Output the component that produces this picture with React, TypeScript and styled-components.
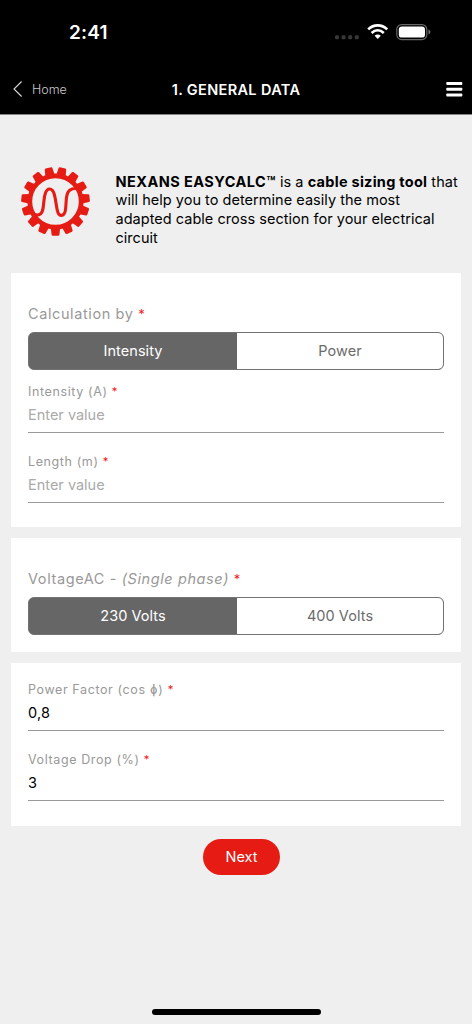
import React from "react";
import styled, { createGlobalStyle } from "styled-components";

const GlobalStyle = createGlobalStyle`
  * { box-sizing: border-box; }
  body {
    margin: 0;
    background: #efefef;
    font-family: Inter, "Liberation Sans", sans-serif;
    color: #000;
  }
`;

const Screen = styled.main`
  display: flex;
  flex-direction: column;
  width: 472px;
  height: 1024px;
  background: #efefef;
  overflow: hidden;
`;

const Header = styled.header`
  height: 115px;
  background: #000;
  color: #fff;
  border-bottom: 1px solid #858585;
`;

const StatusBar = styled.div`
  display: flex;
  align-items: center;
  justify-content: space-between;
  height: 64px;
  padding: 0 41px 0 69px;
`;

const Clock = styled.span`
  font-size: 19px;
  font-weight: 600;
  line-height: 24px;
  letter-spacing: 0.15px;
  margin-top: 1px;
`;

const NavBar = styled.nav`
  display: grid;
  grid-template-columns: 134px 1fr 138px;
  align-items: center;
  height: 50px;
  padding: 0 9px 0 13px;
`;

const Back = styled.a`
  display: flex;
  align-items: center;
  gap: 10px;
  font-size: 12.5px;
  font-weight: 300;
  line-height: 18px;
  color: #c9c9c9;
`;

const BackText = styled.span`
  padding-top: 2px;
`;

const Title = styled.h1`
  margin: 1px 0 0;
  font-size: 14.5px;
  font-weight: 600;
  line-height: 18px;
  letter-spacing: 0.35px;
  text-align: center;
  white-space: nowrap;
`;

const MenuIcon = styled.svg`
  justify-self: end;
`;

const Intro = styled.section`
  display: flex;
  height: 158px;
  padding: 52px 0 0 21px;
`;

const IntroText = styled.p`
  margin: 5.7px 0 0 25.5px;
  width: 350px;
  font-size: 14.5px;
  line-height: 18.75px;
  letter-spacing: 0.03px;
`;

const Line = styled.span`
  display: block;
  white-space: nowrap;
`;

const Strong = styled.b<{ $spacing: number }>`
  font-weight: 700;
  letter-spacing: ${(p) => p.$spacing}px;
`;

const Card = styled.section<{ $height: number; $top: number }>`
  flex: none;
  height: ${(p) => p.$height}px;
  margin: 0 11px 11px;
  padding: ${(p) => p.$top}px 17px 0;
  background: #fff;
`;

const GroupLabel = styled.div`
  height: 28px;
  font-size: 14.5px;
  line-height: 20px;
  letter-spacing: 0.6px;
  color: #999;
`;

const Required = styled.span`
  font-size: 0.9em;
  color: #ee1c1c;
`;

const Segments = styled.div`
  display: flex;
  height: 38px;
  border: 1px solid #737373;
  border-radius: 6px;
  background: #666;
`;

const Segment = styled.button<{ $active?: boolean }>`
  flex: ${(p) => (p.$active ? "0 0 208px" : "1")};
  padding: 0;
  border: 0;
  border-radius: ${(p) => (p.$active ? "5px 0 0 5px" : "0 5px 5px 0")};
  font: 400 14.5px/36px Inter, sans-serif;
  letter-spacing: 0.06px;
  background: ${(p) => (p.$active ? "#666" : "#fff")};
  color: ${(p) => (p.$active ? "#fff" : "#6b6b6b")};
`;

const FieldBox = styled.div`
  display: flex;
  flex-direction: column;
  height: 70.3px;
`;

const FieldLabel = styled.label`
  height: 18px;
  font-size: 12.5px;
  line-height: 20px;
  letter-spacing: 0.61px;
  color: #999;
`;

const FieldValue = styled.div<{ $empty?: boolean }>`
  height: 33px;
  padding-top: 5px;
  border-bottom: 1px solid #999;
  font-size: 14.5px;
  line-height: 20px;
  letter-spacing: ${(p) => (p.$empty ? 0 : 0.2)}px;
  color: ${(p) => (p.$empty ? "#aaa" : "#000")};
`;

const Next = styled.button`
  flex: none;
  align-self: center;
  width: 77px;
  height: 36px;
  margin: 2px 0 0 11px;
  padding: 0;
  border: 0;
  border-radius: 18px;
  background: #e51b14;
  color: #fff;
  font: 400 14.5px/36px Inter, sans-serif;
`;

const HomeIndicator = styled.div`
  flex: none;
  align-self: center;
  width: 169px;
  height: 6px;
  margin: auto 0 9px;
  border-radius: 3px;
  background: #000;
`;

function StatusIcons() {
  return (
    <svg width="97" height="18" viewBox="0 0 97 18">
      <g fill="#383838">
        <rect x="1" y="12.3" width="4" height="4" rx="1.3" />
        <rect x="7.5" y="12.3" width="4" height="4" rx="1.3" />
        <rect x="14.2" y="12.3" width="4" height="4" rx="1.3" />
        <rect x="20.8" y="12.3" width="4" height="4" rx="1.3" />
      </g>
      <g fill="none" stroke="#fff" strokeWidth="2.7">
        <path d="M34.2 6.4C39.6 1.1 47.8 1.1 53.2 6.4" />
        <path d="M37.6 9.9C41.3 6.5 46.1 6.5 49.8 9.9" />
      </g>
      <path fill="#fff" d="M43.7 16L40.6 12.7Q43.7 10.1 46.8 12.7Z" />
      <rect x="62.8" y="1.6" width="30" height="15" rx="4.8" fill="none" stroke="#666" strokeWidth="1.2" />
      <rect x="64.8" y="3.5" width="26.2" height="11.1" rx="3.2" fill="#fff" />
      <path fill="#777" d="M94.5 6.6Q96.3 7.4 96.3 9.1Q96.3 10.8 94.5 11.6Z" />
    </svg>
  );
}

const TEETH = Array.from({ length: 15 }, (_, i) => 12 + i * 24);

function GearLogo() {
  return (
    <svg width="69" height="70" viewBox="-34.5 -34.5 69 70">
      <g fill="#e51b14">
        {TEETH.map((angle) => (
          <path
            key={angle}
            transform={`rotate(${angle})`}
            d="M-4.7 -26.5L-3.9 -33.3Q-3.7 -34.3 -2.8 -34.3H2.8Q3.7 -34.3 3.9 -33.3L4.7 -26.5Z"
          />
        ))}
      </g>
      <circle r="25.7" fill="none" stroke="#e51b14" strokeWidth="4.8" />
      <path
        d="M-21 13C-16 14.5-13.3 12.5-12.4 6.5C-11.5 .5-11.6-4-10.3-7.7C-8.3-14.2-3.4-14-1.4-7.7C.2-2.5.7 4 1.8 8.8C3.4 15.6 8.7 15.6 9.9 8.8C10.8 3.5 10.2-2 11.6-7C13-12 16-13.3 21-12.9"
        fill="none"
        stroke="#e51b14"
        strokeWidth="3.1"
      />
    </svg>
  );
}

interface FieldProps {
  label: string;
  value?: string;
}

function Field({ label, value }: FieldProps) {
  return (
    <FieldBox>
      <FieldLabel>
        {label} <Required>*</Required>
      </FieldLabel>
      <FieldValue $empty={!value}>{value ?? "Enter value"}</FieldValue>
    </FieldBox>
  );
}

const FieldGroup = styled.div`
  padding-top: 12px;
`;

export default function App() {
  return (
    <Screen>
      <GlobalStyle />
      <Header>
        <StatusBar>
          <Clock>2:41</Clock>
          <StatusIcons />
        </StatusBar>
        <NavBar>
          <Back>
            <svg width="9" height="16" viewBox="0 0 9 16" fill="none" stroke="#d8d8d8" strokeWidth="1.1">
              <path d="M8.6 .5L1 8L8.6 15.5" />
            </svg>
            <BackText>Home</BackText>
          </Back>
          <Title>1. GENERAL DATA</Title>
          <MenuIcon width="17" height="16" viewBox="0 0 17 16" fill="#fff">
            <rect x="0.3" y="1" width="16" height="3" rx="0.8" />
            <rect x="0.3" y="6.7" width="16" height="3" rx="0.8" />
            <rect x="0.3" y="12.5" width="16" height="3" rx="0.8" />
          </MenuIcon>
        </NavBar>
      </Header>
      <Intro>
        <GearLogo />
        <IntroText>
          <Line>
            <Strong $spacing={0.45}>NEXANS EASYCALC™</Strong> is a <Strong $spacing={0.27}>cable sizing tool</Strong> that
          </Line>
          <Line>will help you to determine easily the most</Line>
          <Line>adapted cable cross section for your electrical</Line>
          <Line>circuit</Line>
        </IntroText>
      </Intro>
      <Card $height={254} $top={31}>
        <GroupLabel>
          Calculation by <Required>*</Required>
        </GroupLabel>
        <Segments>
          <Segment $active>Intensity</Segment>
          <Segment>Power</Segment>
        </Segments>
        <FieldGroup>
          <Field label="Intensity (A)" />
          <Field label="Length (m)" />
        </FieldGroup>
      </Card>
      <Card $height={114} $top={31}>
        <GroupLabel>
          VoltageAC - <i>(Single phase)</i> <Required>*</Required>
        </GroupLabel>
        <Segments>
          <Segment $active>230 Volts</Segment>
          <Segment>400 Volts</Segment>
        </Segments>
      </Card>
      <Card $height={163} $top={17}>
        <Field label="Power Factor (cos ɸ)" value="0,8" />
        <Field label="Voltage Drop (%)" value="3" />
      </Card>
      <Next>Next</Next>
      <HomeIndicator />
    </Screen>
  );
}
